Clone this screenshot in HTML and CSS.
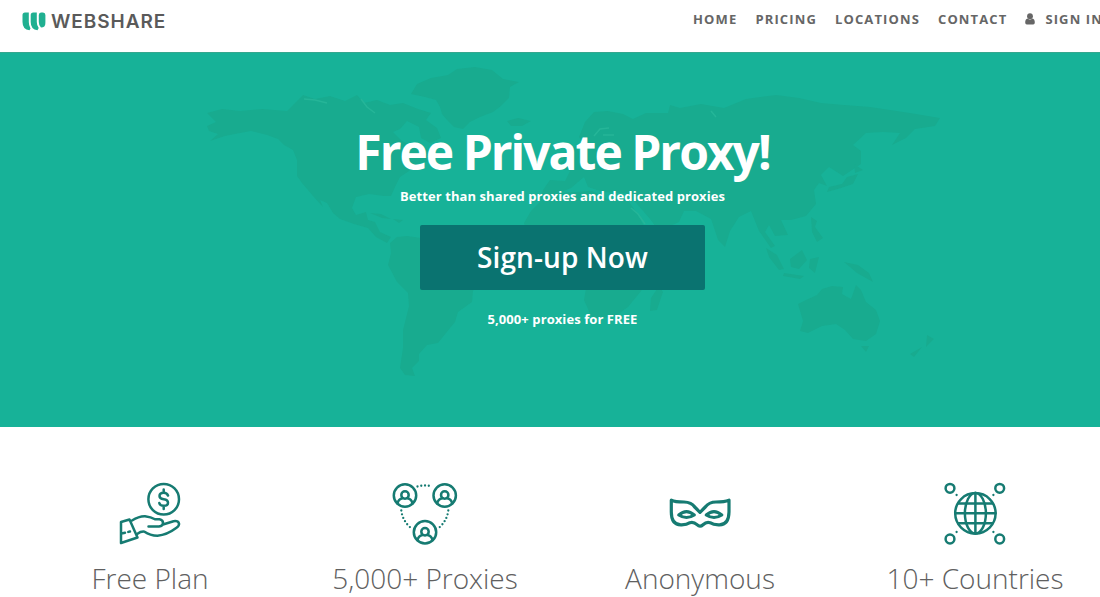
FILE: index.html
```html
<!DOCTYPE html>
<html lang="en">
<head>
  <meta charset="UTF-8">
  <meta name="viewport" content="width=device-width, initial-scale=1.0">
  <title>Webshare - Free Private Proxy</title>
  <link rel="stylesheet" href="styles.css">
</head>
<body>
  <div class="page">
    <header class="header">
      <a class="logo" href="#">
        <svg width="24" height="19" viewBox="0 0 24 19">
          <path d="M0.5 3Q0.5 .5 3 .5H6.8V10Q6.8 13.5 8.5 16.5L7.5 18.3Q.5 17.5 .5 10Z"/>
          <path d="M8.7 3Q8.7 .5 11.2 .5H14.8V10Q14.8 13.5 16.7 16L15.5 18.3Q8.7 17.5 8.7 10Z"/>
          <path d="M16.8 3Q16.8 .5 19 .5H21Q23.4 .5 23.4 3V11Q23.4 15.5 19 15.5Q16.8 14 16.8 10Z"/>
        </svg>
        <span class="logo-text">WEBSHARE</span>
      </a>
      <nav class="nav">
        <a href="#">HOME</a>
        <a href="#">PRICING</a>
        <a href="#">LOCATIONS</a>
        <a href="#">CONTACT</a>
        <a href="#" class="signin">
          <svg width="10" height="12" viewBox="0 0 10 12">
            <circle cx="5" cy="3.2" r="2.9"/>
            <path d="M2.5 5.5Q5 7.5 7.5 5.5Q9.8 6 9.8 9.5Q9.8 11.5 8.2 11.5H1.8Q.2 11.5 .2 9.5Q.2 6 2.5 5.5Z"/>
          </svg>
          <span>SIGN IN</span>
        </a>
      </nav>
    </header>

    <section class="hero">
      <svg class="map" width="1100" height="374" viewBox="0 53 1100 374">
        <!-- north america -->
        <path d="M207 113L222 109 240 111 262 109 287 111 303 95 315 99 330 96 345 101 357 95 364 103 377 100 390 105 403 103 418 109 431 113 426 120 437 128 441 138 430 143 421 138 419 127 407 121 400 129 393 132 402 141 412 146 420 144 432 153 429 161 416 164 409 171 400 177 395 187 391 196 384 196 369 194 356 197 352 208 356 215 366 212 368 220 375 222 380 232 391 237 387 243 376 237 368 228 354 224 340 219 333 213 327 203 320 200 323 207 313 196 302 183 297 176 297 160 293 150 284 145 278 139 267 135 251 131 240 133 225 136 210 141 218 134 209 131 207 126 216 122Z"/>
        <path d="M370 213L381 214 391 219 382 218ZM393 219L403 220 399 223Z"/>
        <!-- greenland and iceland -->
        <path d="M411 94L417 84 431 78 448 75 457 69 475 67 492 70 503 79 519 82 510 87 509 98 501 106 493 112 480 117 470 122 463 129 454 127 447 120 442 114 440 107 436 100 425 97ZM507 121L518 118 531 121 522 126 511 126Z"/>
        <!-- south america -->
        <path d="M390 243L397 237 407 236 421 238 435 245 444 253 458 260 478 270 481 279 473 291 472 302 458 312 455 322 446 333 438 343 427 345 419 354 419 361 412 368 415 376 405 375 400 368 403 348 403 330 409 306 408 293 397 282 388 265 391 253Z"/>
        <!-- europe and asia -->
        <path d="M540 202L543 190 550 180 565 181 570 171 557 166 565 158 579 151 583 143 579 137 585 122 594 112 608 111 623 114 633 119 646 113 668 113 670 105 680 108 701 104 724 108 746 99 776 95 799 98 821 103 844 105 870 107 890 110 916 114 940 118 935 126 915 129 906 138 892 145 900 133 883 132 866 133 853 145 861 151 861 164 843 176 829 167 821 175 827 186 819 183 814 190 816 204 806 216 791 220 781 220 788 235 775 236 769 225 765 232 775 246 771 248 759 231 751 211 739 217 730 231 725 247 718 240 711 219 696 211 684 211 679 222 659 231 650 219 637 204 626 193 603 192 588 187 584 177 571 188 556 194Z"/>
        <path d="M569 151L577 145 580 156 570 164ZM561 154L567 152 566 159 560 159Z"/>
        <!-- africa -->
        <path d="M540 202L560 193 592 191 607 199 627 199 636 212 643 224 651 237 663 237 656 252 644 265 646 285 637 296 628 307 614 317 592 318 584 300 587 282 575 262 563 251 545 251 529 239 524 223 531 211ZM659 286L663 292 657 310 650 311 651 298Z"/>
        <!-- japan, philippines, indonesia -->
        <path d="M847 177L858 174 853 184 841 188 827 192 829 187 842 184ZM854 164L863 170 855 173ZM811 217L817 221 815 227 823 238 817 242 812 232ZM766 248L777 255 784 269 779 270 769 257ZM784 273L804 276 800 279 783 276ZM790 259L802 250 807 260 799 269 791 267ZM810 259L819 257 815 273 809 268ZM844 262L858 265 869 273 873 282 857 273Z"/>
        <!-- australia and new zealand -->
        <path d="M798 304L806 300 817 295 822 289 832 286 843 287 842 294 851 299 856 285 861 290 866 302 876 310 880 321 876 334 866 341 853 339 845 330 836 324 822 326 808 333 800 331 803 321ZM861 346L869 346 866 352ZM927 335L934 339 926 347ZM922 347L914 357 910 354Z"/>
        <g class="lakes">
          <path d="M304 99L315 100 327 103M361 99L367 107 375 113M631 208L638 214 645 224M594 136L600 129 609 128M603 135L614 135M711 111L716 117"/>
        </g>
      </svg>
      <div class="hero-content">
        <h1>Free Private Proxy!</h1>
        <p class="tagline">Better than shared proxies and dedicated proxies</p>
        <a class="signup" href="#">Sign-up Now</a>
        <p class="note">5,000+ proxies for FREE</p>
      </div>
    </section>

    <section class="features">
      <div class="feature">
        <svg class="icon" width="90" height="85" viewBox="0 0 90 85">
          <circle cx="58.7" cy="29.2" r="15.3"/>
          <path d="M63 25.5Q62 22.7 58.7 22.7Q54.5 22.7 54.5 26Q54.5 28.7 58.7 29.2Q63 29.8 63 32.7Q63 35.8 58.7 35.8Q55 35.8 54.3 33M58.7 19.5V22.5M58.7 36V39"/>
          <path d="M16 52L24.5 49.5 32.5 67.5 16 73ZM16.5 63.5L20 62.8M23.3 61.9L25 61.5"/>
          <path d="M27 50.5Q34 46 40 46.2Q46 46.8 50 49.3H54.5Q58 50 58 53T54 56.5H43.5M58 54.5L68.5 51.2Q73 50.5 74 53.3Q74.5 55.8 71.5 57.8Q62 65 52.5 65.7Q45 65.5 39.5 61.7Q36 61.2 32.5 63.8"/>
        </svg>
        <h2>Free Plan</h2>
      </div>
      <div class="feature">
        <svg class="icon" width="90" height="85" viewBox="0 0 90 85">
          <g id="person">
            <circle cx="25" cy="25.5" r="11.2"/>
            <circle cx="25" cy="25" r="3.7"/>
            <path d="M17.5 33.5Q18.5 29 22.5 28.3M32.5 33.5Q31.5 29 27.5 28.3"/>
          </g>
          <use href="#person" x="39.7"/>
          <use href="#person" x="20" y="36.7"/>
          <path class="dots" d="M37.5 16.5Q45 14.5 52.5 16.5M21.3 40.5Q22.5 51 31 58M68.3 40.5Q67 51 58.7 58"/>
        </svg>
        <h2>5,000+ Proxies</h2>
      </div>
      <div class="feature">
        <svg class="icon mask" width="90" height="85" viewBox="0 0 90 85">
          <path d="M16.3 30.2Q20 32 29 32Q36.5 32.2 39.7 37L45 42.3 50.3 37Q54 32 61 32Q69.5 32 74 30.2V42Q73.8 54.8 64.5 54.8Q58.5 55 55 52.7Q51.5 51.5 48 54.7Q45 57.5 42 54.7Q38.5 51.5 35 52.7Q31.5 55 25.8 54.8Q16.3 54.8 16.3 42Z"/>
          <path d="M23.8 45Q31.5 38.3 39.2 45Q31.5 50 23.8 45ZM51.3 45Q59 38.3 66.7 45Q59 50 51.3 45Z"/>
        </svg>
        <h2>Anonymous</h2>
      </div>
      <div class="feature">
        <svg class="icon" width="90" height="85" viewBox="0 0 90 85">
          <circle cx="45.4" cy="43.3" r="20.2"/>
          <ellipse cx="45.4" cy="43.3" rx="10.5" ry="20.2"/>
          <path d="M45.4 23V63.5M25.2 43.3H65.6M28.5 33.4H62.3M28.5 53.3H62.3"/>
          <circle cx="20" cy="18.3" r="4.4"/>
          <circle cx="69.7" cy="18.3" r="4.4"/>
          <circle cx="20" cy="69" r="4.4"/>
          <circle cx="69.7" cy="69" r="4.4"/>
          <path class="dots" d="M26.6 25V25.1M63.4 25V25.1M26.6 62V62.1M63.4 62V62.1"/>
        </svg>
        <h2>10+ Countries</h2>
      </div>
    </section>
  </div>
</body>
</html>
```
FILE: styles.css
```css
* {
  box-sizing: border-box;
}
body {
  margin: 0;
  overflow: hidden;
  background-color: #fff;
  font-family: "Open Sans", sans-serif;
}
a {
  text-decoration: none;
}
.page {
  width: 1125px;
}
.header {
  display: flex;
  justify-content: space-between;
  height: 53px;
  padding: 0 22px;
  border-bottom: 1px solid #35a78e;
}
.logo {
  display: flex;
  align-items: center;
  gap: 5px;
  height: 42px;
}
.logo svg {
  fill: #20b091;
}
.logo-text {
  color: #5a5a5a;
  font-family: Inter, sans-serif;
  font-size: 19px;
  font-weight: 600;
  letter-spacing: 0.95px;
}
.nav {
  display: flex;
  align-items: center;
  gap: 18px;
  height: 37px;
}
.nav a {
  color: #666;
  font-size: 13px;
  font-weight: 700;
  letter-spacing: 1.13px;
  white-space: nowrap;
}
.nav .signin {
  display: flex;
  align-items: center;
  gap: 10px;
}
.signin svg {
  fill: #666;
}
.hero {
  position: relative;
  height: 374px;
  background-color: #17b298;
  color: #fff;
  text-align: center;
}
.map {
  position: absolute;
  top: 0;
  left: 0;
  fill: #18ab8f;
}
.lakes {
  fill: none;
  stroke: #25b598;
  stroke-width: 1.5;
}
.hero-content {
  position: relative;
  padding-top: 66px;
}
.hero h1 {
  margin: 0;
  font-size: 48px;
  font-weight: 700;
  line-height: 66px;
  letter-spacing: -2px;
}
.hero p {
  margin: 0;
  font-size: 13px;
  font-weight: 700;
  line-height: 22px;
  letter-spacing: 0.08px;
}
.signup {
  display: block;
  width: 285px;
  margin: 18px auto;
  background-color: #0a7370;
  border-radius: 2px;
  color: #fff;
  font-size: 28px;
  font-weight: 600;
  line-height: 65px;
  letter-spacing: 0.1px;
}
.features {
  display: grid;
  grid-template-columns: repeat(4, 275px);
  justify-content: center;
  padding-top: 43px;
}
.feature {
  display: flex;
  flex-direction: column;
  align-items: center;
}
.feature h2 {
  margin: 3px 0 0;
  color: #606060;
  font-size: 28px;
  font-weight: 300;
  line-height: 41px;
}
.icon {
  fill: none;
  stroke: #167b72;
  stroke-width: 2.5;
  stroke-linecap: round;
  stroke-linejoin: round;
}
.mask {
  stroke-width: 3.2;
}
.dots {
  stroke-width: 2.3;
  stroke-dasharray: 0 3.8;
}
```
